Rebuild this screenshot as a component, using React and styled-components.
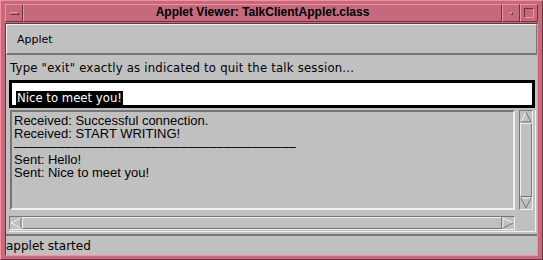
import React from "react";
import styled, { createGlobalStyle } from "styled-components";

const Global = createGlobalStyle`
  html, body { margin: 0; padding: 0; background: #c0c0c0; }
  body { font-family: "DejaVu Sans", sans-serif; }
`;

const PINK = "#c46a7c";
const PINK_LIGHT = "#f4909f";
const PINK_DARK = "#6a3440";
const GRAY = "#c0c0c0";
const GRAY_LIGHT = "#f0f0f0";
const GRAY_DARK = "#767676";

const Frame = styled.div`
  box-sizing: border-box;
  width: 543px;
  height: 260px;
  background: ${PINK};
  border: 1px solid;
  border-color: ${PINK_LIGHT} ${PINK_DARK} ${PINK_DARK} ${PINK_LIGHT};
  padding: 3px 4px 3px 4px;
  display: flex;
  flex-direction: column;
`;

const TitleBar = styled.div`
  display: flex;
  height: 18px;
`;

const FrameButton = styled.div`
  box-sizing: border-box;
  width: 18px;
  height: 18px;
  background: ${PINK};
  border: 1px solid;
  border-color: ${PINK_LIGHT} ${PINK_DARK} ${PINK_DARK} ${PINK_LIGHT};
  display: flex;
  align-items: center;
  justify-content: center;
`;

const Dash = styled.div`
  box-sizing: border-box;
  width: 9px;
  height: 3px;
  border: 1px solid;
  border-color: ${PINK_LIGHT} ${PINK_DARK} ${PINK_DARK} ${PINK_LIGHT};
`;

const Dot = styled.div`
  box-sizing: border-box;
  width: 3px;
  height: 3px;
  border: 1px solid;
  border-color: ${PINK_LIGHT} ${PINK_DARK} ${PINK_DARK} ${PINK_LIGHT};
`;

const Square = styled.div`
  box-sizing: border-box;
  width: 10px;
  height: 10px;
  border: 1px solid;
  border-color: ${PINK_DARK} ${PINK_LIGHT} ${PINK_LIGHT} ${PINK_DARK};
`;

const Title = styled.div`
  flex: 1;
  box-sizing: border-box;
  border: 1px solid;
  border-color: ${PINK_LIGHT} ${PINK_DARK} ${PINK_DARK} ${PINK_LIGHT};
  text-align: center;
  font-family: "Liberation Sans", Arial, sans-serif;
  font-weight: bold;
  font-size: 12px;
  line-height: 15px;
  color: #000;
`;

const Client = styled.div`
  flex: 1;
  margin-top: 1px;
  background: ${GRAY};
  border: 1px solid;
  border-color: ${PINK_DARK} ${PINK_LIGHT} ${PINK_LIGHT} ${PINK_DARK};
  display: flex;
  flex-direction: column;
`;

const MenuBar = styled.div`
  box-sizing: border-box;
  height: 31px;
  border: 1px solid;
  border-width: 1px 1px 2px 1px;
  border-color: ${GRAY_LIGHT} ${GRAY_DARK} ${GRAY_DARK} ${GRAY_LIGHT};
  padding: 8px 0 0 10px;
  font-size: 11px;
  color: #000;
`;

const Body = styled.div`
  display: flex;
  flex-direction: column;
  padding: 0 1px 2px 3px;
  border-bottom: 2px solid ${GRAY_DARK};
`;

const Label = styled.div`
  box-sizing: border-box;
  height: 18px;
  padding: 6px 0 0 1px;
  font-size: 11.7px;
  letter-spacing: 0.2px;
  line-height: 14px;
  color: #000;
`;

const Field = styled.div`
  box-sizing: border-box;
  height: 28px;
  margin: 7px 1px 2px 0;
  border: 3px solid #000;
  background: #fff;
  padding: 4px 0 0 4px;
`;

const Selected = styled.span`
  background: #000;
  color: #fff;
  font-size: 11.7px;
  line-height: 15px;
  display: inline-block;
  padding: 0 1px;
`;

const Panel = styled.div`
  display: grid;
  grid-template-columns: 1fr 14px;
  grid-template-rows: 100px 14px;
  column-gap: 4px;
  row-gap: 6px;
  padding: 0 2px 1px 0;
  border-right: 1px solid ${GRAY_LIGHT};
  border-bottom: 1px solid ${GRAY_LIGHT};
`;

const TextArea = styled.div`
  box-sizing: border-box;
  margin-left: 1px;
  border: 2px solid;
  border-color: ${GRAY_DARK} ${GRAY_LIGHT} ${GRAY_LIGHT} ${GRAY_DARK};
  padding: 2px 2px 0;
  font-family: "Liberation Sans", Arial, sans-serif;
  font-size: 13px;
  line-height: 13px;
  color: #000;
  white-space: pre;
  overflow: hidden;
`;

const Track = styled.div`
  box-sizing: border-box;
  border: 1px solid;
  border-color: ${GRAY_DARK} ${GRAY_LIGHT} ${GRAY_LIGHT} ${GRAY_DARK};
  display: flex;
  flex-direction: ${(p) => (p.$vertical ? "column" : "row")};
  background: ${GRAY};
`;

const Arrow = styled.svg`
  flex: none;
  display: block;
`;

const Thumb = styled.div`
  flex: 1;
  box-sizing: border-box;
  border: 1px solid;
  border-color: ${GRAY_LIGHT} ${GRAY_DARK} ${GRAY_DARK} ${GRAY_LIGHT};
`;

const Status = styled.div`
  flex: 1;
  font-size: 12px;
  line-height: 14px;
  color: #000;
  padding: 3px 0 0 0;
`;

const ArrowUp = () => (
  <Arrow width="12" height="12" viewBox="0 0 12 12">
    <polyline points="1,11 6,1" stroke={GRAY_LIGHT} fill="none" />
    <polyline points="6,1 11,11 1,11" stroke={GRAY_DARK} fill="none" />
  </Arrow>
);

const ArrowDown = () => (
  <Arrow width="12" height="12" viewBox="0 0 12 12">
    <polyline points="1,1 11,1" stroke={GRAY_LIGHT} fill="none" />
    <polyline points="1,1 6,11 11,1" stroke={GRAY_DARK} fill="none" />
  </Arrow>
);

const ArrowLeft = () => (
  <Arrow width="12" height="12" viewBox="0 0 12 12">
    <polyline points="11,11 1,6 11,1" stroke={GRAY_LIGHT} fill="none" />
    <polyline points="11,1 11,11" stroke={GRAY_DARK} fill="none" />
  </Arrow>
);

const ArrowRight = () => (
  <Arrow width="12" height="12" viewBox="0 0 12 12">
    <polyline points="1,11 1,1 11,6" stroke={GRAY_LIGHT} fill="none" />
    <polyline points="11,6 1,11" stroke={GRAY_DARK} fill="none" />
  </Arrow>
);

const log = [
  "Received: Successful connection.",
  "Received: START WRITING!",
  "–".repeat(39),
  "Sent: Hello!",
  "Sent: Nice to meet you!",
].join("\n");

const App = () => {
  return (
    <>
      <Global />
      <Frame>
        <TitleBar>
          <FrameButton>
            <Dash />
          </FrameButton>
          <Title>Applet Viewer: TalkClientApplet.class</Title>
          <FrameButton>
            <Dot />
          </FrameButton>
          <FrameButton>
            <Square />
          </FrameButton>
        </TitleBar>
        <Client>
          <MenuBar>Applet</MenuBar>
          <Body>
            <Label>Type "exit" exactly as indicated to quit the talk session...</Label>
            <Field>
              <Selected>Nice to meet you!</Selected>
            </Field>
            <Panel>
              <TextArea>{log}</TextArea>
              <Track $vertical>
                <ArrowUp />
                <Thumb />
                <ArrowDown />
              </Track>
              <Track>
                <ArrowLeft />
                <Thumb />
                <ArrowRight />
              </Track>
            </Panel>
          </Body>
          <Status>applet started</Status>
        </Client>
      </Frame>
    </>
  );
};

export default App;
